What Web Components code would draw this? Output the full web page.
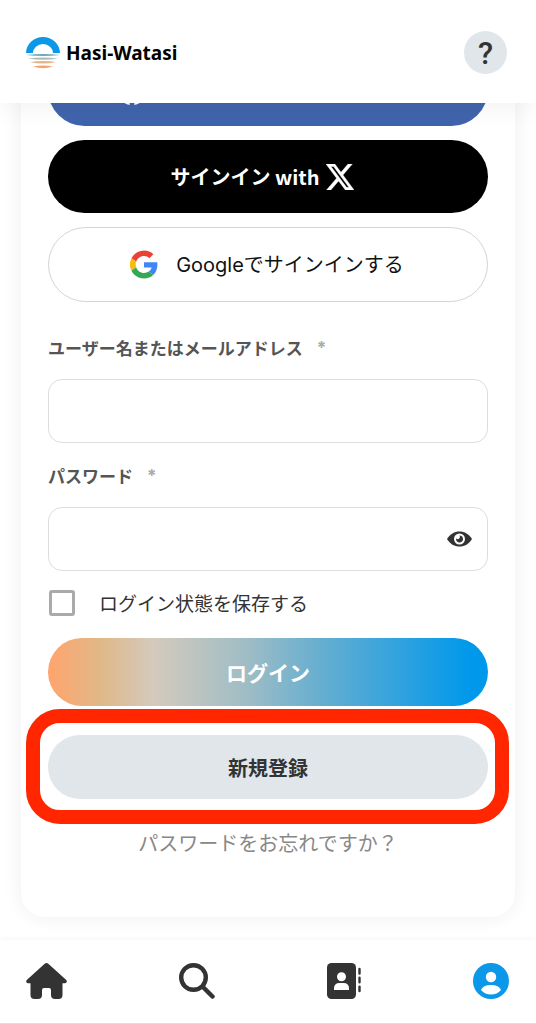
<!DOCTYPE html>
<html lang="ja">
<head>
<meta charset="utf-8">
<meta name="viewport" content="width=device-width, initial-scale=1">
<title>Hasi-Watasi</title>
<style>
  body {
    margin: 0;
    background: #fff;
    color: #333;
    font-family: Inter, "Noto Sans CJK JP", sans-serif;
  }
</style>
</head>
<body>
<hw-app>
  <hw-header slot="header"></hw-header>
  <hw-card>
    <hw-social-button brand="facebook" label="Facebook"></hw-social-button>
    <hw-social-button brand="x">サインイン with</hw-social-button>
    <hw-social-button brand="google">Googleでサインインする</hw-social-button>
    <hw-login-form></hw-login-form>
  </hw-card>
  <hw-nav slot="footer"></hw-nav>
</hw-app>

<script>
const define = (name, html, setup) => {
  const template = document.createElement('template');
  template.innerHTML = html;
  customElements.define(name, class extends HTMLElement {
    constructor() {
      super();
      this.attachShadow({ mode: 'open' }).append(template.content.cloneNode(true));
    }
    connectedCallback() {
      if (setup) setup(this, this.shadowRoot);
    }
  });
};

/* The scroller is reversed so that it opens at the end of the form. */
define('hw-app', `
  <style>
    :host { display: flex; flex-direction: column; height: 100vh; }
    main { flex: 1; min-height: 0; display: flex; flex-direction: column-reverse; overflow: hidden auto; scrollbar-width: none; }
    ::slotted(hw-header), ::slotted(hw-nav) { flex: none; }
  </style>
  <slot name="header"></slot>
  <main><slot></slot></main>
  <slot name="footer"></slot>`);

define('hw-header', `
  <style>
    :host { display: flex; align-items: center; justify-content: space-between; position: relative; z-index: 2;
      box-sizing: border-box; min-height: 103px; padding: 2px 29px 0 25px; background: #fff; box-shadow: 0 0 30px rgba(0,0,0,.07); }
    a { display: flex; align-items: center; gap: 5px; color: #000; text-decoration: none; font: bold 19px/24px "Noto Sans", sans-serif; }
    svg { width: 36px; height: 32px; }
    button { width: 43px; height: 43px; padding: 2px 0 0; border: 0; border-radius: 50%; background: #e0e6e9; color: #333;
      font: 500 31px/41px Roboto, sans-serif; }
  </style>
  <a href="#">
    <svg viewBox="0 0 36 32" aria-hidden="true">
      <path d="M1 16a17 16 0 0 1 34 0h-7a10 9 0 0 0-20 0z" fill="#0b98e8"/>
      <path d="M1 18q17-2 34 0-17 2-34 0z" fill="#69a9bd"/>
      <path d="M3 21.500q15-2 30 0-15 2.500-30 0z" fill="#adbdb4"/>
      <path d="M5 25q13-2 26 0-13 3-26 0z" fill="#e2b58c"/>
      <path d="M8 29.500q10-2 20 0-10 3.500-20 0z" fill="#fba26a"/>
    </svg>
    <span>Hasi-Watasi</span>
  </a>
  <button type="button">?</button>`);

define('hw-card', `
  <style>
    :host { display: flex; flex-direction: column; gap: 14px; flex: none; margin: 0 21px 23px; padding: 27px 27px 62px;
      border-radius: 24px; background: #fff; box-shadow: 0 0 20px rgba(0,0,0,.07); }
  </style>
  <slot></slot>`);

const brandIcons = {
  facebook: `<svg viewBox="0 0 24 24" width="30" height="30" aria-hidden="true"><path fill="#fff" d="M24 12.073C24 5.446 18.627 0 12 0S0 5.446 0 12.073c0 5.989 4.388 10.954 10.125 11.854v-8.385H7.078v-3.469h3.047V9.430c0-3.007 1.792-4.669 4.533-4.669 1.312 0 2.686.235 2.686.235v2.953h-1.513c-1.491 0-1.956.925-1.956 1.874v2.250h3.328l-.532 3.469h-2.796v8.385C19.612 23.027 24 18.062 24 12.073z"/></svg>`,
  x: `<svg viewBox="1.254 2.25 21.573 19.5" width="28" height="26" preserveAspectRatio="none" aria-hidden="true"><path fill="#fff" stroke="#fff" stroke-width=".3" d="M18.244 2.250h3.308l-7.227 8.260 8.502 11.240H16.170l-5.214-6.817L4.990 21.750H1.680l7.730-8.835L1.254 2.250H8.080l4.713 6.231zm-1.161 17.520h1.833L7.084 4.126H5.117z"/></svg>`,
  google: `<svg viewBox="0 0 48 48" width="28" height="29" aria-hidden="true"><path fill="#EA4335" d="M24 9.500c3.540 0 6.710 1.220 9.210 3.600l6.850-6.850C35.900 2.380 30.470 0 24 0 14.620 0 6.510 5.380 2.560 13.220l7.980 6.190C12.430 13.720 17.740 9.500 24 9.500z"/><path fill="#4285F4" d="M46.980 24.550c0-1.570-.15-3.090-.38-4.550H24v9.020h12.940c-.58 2.960-2.260 5.480-4.780 7.180l7.730 6c4.510-4.180 7.090-10.360 7.090-17.650z"/><path fill="#FBBC05" d="M10.530 28.590c-.48-1.450-.76-2.990-.76-4.590s.27-3.140.76-4.590l-7.980-6.190C.92 16.460 0 20.120 0 24c0 3.880.92 7.540 2.560 10.780z"/><path fill="#34A853" d="M24 48c6.480 0 11.930-2.130 15.890-5.810l-7.730-6c-2.150 1.450-4.920 2.300-8.160 2.300-6.260 0-11.570-4.220-13.470-9.910l-7.980 6.190C6.510 42.620 14.620 48 24 48z"/></svg>`
};

define('hw-social-button', `
  <style>
    :host { display: block; }
    button { display: flex; align-items: center; justify-content: center; width: 100%; box-sizing: border-box; height: 73px;
      margin: 0; border: 0; border-radius: 38px; font: 20px/30px Inter, "Noto Sans CJK JP", sans-serif; }
    svg { flex: none; }
    :host([brand=facebook]) button { justify-content: flex-start; padding: 0 69px; background: #4064ac; }
    :host([brand=x]) button { flex-direction: row-reverse; gap: 6px; padding: 0 12px 0 0; background: #000; color: #fff;
      font-family: "Noto Sans CJK JP", sans-serif; font-weight: bold; }
    :host([brand=google]) button { height: 75px; gap: 18px; padding: 0 2px 0 0; border: 1px solid #d4d4d4; background: #fff; color: #111; }
  </style>
  <button type="button"><slot></slot></button>`, (host, root) => {
  const button = root.querySelector('button');
  if (!button.querySelector('svg')) button.insertAdjacentHTML('afterbegin', brandIcons[host.getAttribute('brand')]);
  if (host.hasAttribute('label')) button.setAttribute('aria-label', host.getAttribute('label'));
});

define('hw-field', `
  <style>
    :host { display: flex; flex-direction: column; gap: 19px; }
    label { display: flex; gap: 14px; color: #555; font: bold 17px/24px "Noto Sans CJK JP", sans-serif; }
    label span { color: #aaa; font-family: Inter, sans-serif; }
    .box { position: relative; }
    input { display: block; width: 100%; box-sizing: border-box; height: 64px; margin: 0; padding: 0 16px; border: 1px solid #ddd;
      border-radius: 14px; background: #fff; color: #333; font: 20px/30px Inter, "Noto Sans CJK JP", sans-serif; }
    button { display: none; position: absolute; right: 16px; top: 20px; padding: 4px 0; border: 0; background: none; }
    button svg { display: block; }
    :host([type=password]) input { padding-right: 56px; }
    :host([type=password]) button { display: block; }
  </style>
  <label for="input"><slot></slot><span>*</span></label>
  <div class="box">
    <input id="input" required>
    <button type="button" aria-label="パスワードを表示">
      <svg width="25" height="16" viewBox="0 0 25 16" aria-hidden="true">
        <path fill="#333" d="M0 8C3 3 7.500.5 12.500.5S22 3 25 8c-3 5-7.500 7.500-12.500 7.500S3 13 0 8z"/>
        <circle cx="12.500" cy="8" r="5.500" fill="#fff"/>
        <path fill="#333" d="M12.500 4.500a3.500 3.500 0 1 1-3.400 2.700 1.800 1.800 0 0 0 3.400-2.700z"/>
      </svg>
    </button>
  </div>`, (host, root) => {
  const input = root.querySelector('input');
  input.type = host.getAttribute('type') || 'text';
  root.querySelector('button').onclick = () => { input.type = input.type === 'password' ? 'text' : 'password'; };
});

define('hw-highlight', `
  <style>
    :host { display: block; position: relative; }
    :host::after { content: ""; position: absolute; inset: -26px -21px -25px -22px; border: 14px solid #ff2600; border-radius: 34px; pointer-events: none; }
  </style>
  <slot></slot>`);

define('hw-login-form', `
  <style>
    :host { display: block; margin-top: 20px; }
    form { display: flex; flex-direction: column; font: 20px/24px "Noto Sans CJK JP", sans-serif; }
    hw-field + hw-field { margin-top: 21px; }
    .remember { display: flex; align-items: center; gap: 24px; margin: 19px 0 22px 1px; font-size: 19px; line-height: 26px; }
    .remember input { appearance: none; flex: none; width: 26px; height: 26px; margin: 0; border: 3px solid #aaa; border-radius: 3px; background: #fff; }
    .remember input:checked { background: #0b98e8; }
    button { display: block; width: 100%; border: 0; padding: 0; border-radius: 34px; font: bold 20px/30px "Noto Sans CJK JP", sans-serif; }
    .login { height: 68px; color: #fff; font-size: 21px;
      background: linear-gradient(90deg, #ffa46c 0%, #e0b888 12%, #d4cabc 24%, #9fbdc5 45%, #66aed0 62%, #0098eb 96%); }
    hw-highlight { margin: 29px 0 32px; }
    .register { height: 64px; padding-top: 2px; background: #e0e6e9; color: #333; }
    a { align-self: center; color: #888; text-decoration: none; }
  </style>
  <form onsubmit="return false">
    <hw-field>ユーザー名またはメールアドレス</hw-field>
    <hw-field type="password">パスワード</hw-field>
    <label class="remember"><input type="checkbox"><span>ログイン状態を保存する</span></label>
    <button class="login" type="submit">ログイン</button>
    <hw-highlight><button class="register" type="button">新規登録</button></hw-highlight>
    <a href="#">パスワードをお忘れですか？</a>
  </form>`);

define('hw-nav', `
  <style>
    :host { display: block; position: relative; z-index: 2; background: #fff; border-bottom: 1px solid #ddd; box-shadow: 0 0 6px rgba(0,0,0,.06); }
    nav { display: flex; align-items: center; justify-content: space-between; box-sizing: border-box; height: 83px; padding: 0 27px 2px 26px; }
    a { display: block; }
    svg { display: block; }
  </style>
  <nav>
    <a href="#" aria-label="ホーム"><svg width="41" height="36" viewBox="0 0 41 36"><path fill="#333" d="M18.700.8q1.800-1.600 3.600 0L40 16.800q1.200 1.300.6 2.500-.5 1-1.800 1H36.500V32q0 4-4 4H29q-4 0-4-4v-5q0-2-2-2h-5q-2 0-2 2v5q0 4-4 4H8.500q-4 0-4-4V20.300H2.200q-1.300 0-1.800-1Q-.2 18.100 1 16.800z"/></svg></a>
    <a href="#" aria-label="検索"><svg width="36" height="36" viewBox="0 0 36 36" fill="none" stroke="#333"><circle cx="14.500" cy="14.500" r="12.300" stroke-width="4.400"/><path d="M23.500 23.500L33.500 33.500" stroke-width="4.500" stroke-linecap="round"/></svg></a>
    <a href="#" aria-label="連絡先"><svg width="34" height="36" viewBox="0 0 34 36"><rect width="29" height="36" rx="4.500" fill="#333"/><circle cx="14.500" cy="13.700" r="4.500" fill="#fff"/><path d="M7 27v-1.500Q7 20 12.500 20h4q5.500 0 5.500 5.500V27z" fill="#fff"/><path d="M32.500 6v4.500M32.500 14.800v4.500M32.500 23.600v4.500" stroke="#333" stroke-width="2.400" stroke-linecap="round"/></svg></a>
    <a href="#" aria-label="マイページ"><svg width="36" height="36" viewBox="0 0 36 36"><circle cx="18" cy="18" r="18" fill="#0b98e8"/><circle cx="18" cy="14" r="5.200" fill="#fff"/><path d="M8 27q2-5 10-5t10 5q-4 4.500-10 4.500T8 27z" fill="#fff"/></svg></a>
  </nav>`);
</script>
</body>
</html>
